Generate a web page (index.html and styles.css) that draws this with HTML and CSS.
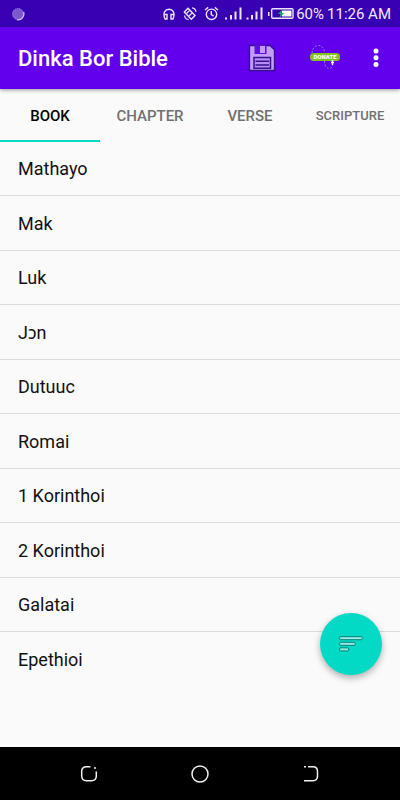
FILE: index.html
```html
<!DOCTYPE html>
<html lang="din">
<head>
<meta charset="utf-8">
<meta name="viewport" content="width=device-width, initial-scale=1">
<title>Dinka Bor Bible</title>
<link rel="stylesheet" href="styles.css">
</head>
<body>
<div class="status">
  <svg class="spinner" width="14" height="14" viewBox="0 0 14 14" aria-hidden="true">
    <circle cx="7" cy="7" r="5.500" fill="#7c58cf"/>
    <circle cx="7" cy="7" r="5.500" fill="none" stroke="#a78fe0" stroke-width="1" stroke-dasharray="1.200 .8"/>
    <path d="M12.600 5A6 6 0 0 1 6 12.800" fill="none" stroke="#cfc2f0" stroke-width="1.200"/>
  </svg>
  <div class="status-info">
    <svg width="106" height="16" viewBox="163 6 106 16" fill="none" stroke="#ece6fa" stroke-width="1.400" aria-hidden="true">
      <path d="M166 19C160.500 6 179.500 6 174 19M165.500 19h2.500v-4.500h-2.500M174.500 19h-2.500v-4.500h2.500"/>
      <path d="M189 8.300l7 7.200-3.700 3.700-7-7.200z"/>
      <path d="M187.500 13.500l3.200-3.200M190 16l3.200-3.200M193 7.800q3.500.4 4 4M185.500 15.500q.5 3.500 4 4.200" stroke-width="1.200"/>
      <circle cx="212.500" cy="14.300" r="5.200"/>
      <path d="M212.300 11v3.700l2.300 1.400M206 10l3.200-2.600M219 10l-3.200-2.600"/>
      <g fill="#ece6fa" stroke="none">
        <path d="M226 17.500h2v2h-2zM231 15h2v4.500h-2zM235.500 11.500h2v8h-2zM240.500 7.500h2v12h-2z"/>
        <path d="M247.500 17.500h2v2h-2zM252 15h2v4.500h-2zM256.500 11.500h2v8h-2zM261.500 7.500h2v12h-2z"/>
      </g>
    </svg>
    <svg width="26" height="16" viewBox="269 6 26 16" aria-hidden="true">
      <path d="M269 12h1.500v4H269z" fill="#ece6fa"/>
      <rect x="272.700" y="8.700" width="21.300" height="9.600" rx="1" fill="none" stroke="#ece6fa" stroke-width="1.400"/>
      <path d="M283 10.500h9.500v6H283z" fill="#fff"/>
      <path d="M283.500 9.500l-4.500 4.300h2.700l-1.200 3.700 4.800-4.500h-3z" fill="#24b45a"/>
    </svg>
    <span class="charge">60%</span>
    <span class="clock">11:26 AM</span>
  </div>
</div>
<header class="appbar">
  <h1>Dinka Bor Bible</h1>
  <button class="action save" aria-label="Save">
    <svg width="28" height="28" viewBox="0 0 28 28">
      <path d="M1.500 1.500H22l4.500 4.200v20.800h-25z" fill="#c39bfb" stroke="#35108a" stroke-width="1.300"/>
      <path d="M6.500 1h12v9h-12z" fill="#5c10da"/>
      <path d="M12 2h5v7h-5z" fill="#c39bfb"/>
      <path d="M6 13.500h16.500v10.800H6z" fill="#b78bf8" stroke="#35108a" stroke-width="1.500"/>
      <path d="M7.500 17.200h13.500M7.500 21h13.500" stroke="#35108a" stroke-width="1.500"/>
    </svg>
  </button>
  <button class="action donate" aria-label="Donate">
    <svg width="32" height="28" viewBox="0 0 32 28">
      <path d="M3 9C3 4 7 1 10 1.500S15 4 15.500 8M15.500 17c0 5 2 7.500 5 7.500s3-4 3-6" fill="none" stroke="#8fa2dc" stroke-width=".8" stroke-dasharray="2 1.600"/>
      <rect x="1" y="9" width="30" height="8" rx="3.500" fill="#7fc31c"/>
      <text class="donate-text" x="16" y="15" text-anchor="middle">DONATE</text>
      <path d="M23.500 16v5M22 18.500h3" stroke="#fff" stroke-width="1.400"/>
    </svg>
  </button>
  <button class="action more" aria-label="More options">
    <svg width="6" height="20" viewBox="0 0 6 20" fill="#fff"><circle cx="3" cy="3" r="2.500"/><circle cx="3" cy="9.800" r="2.500"/><circle cx="3" cy="16.600" r="2.500"/></svg>
  </button>
</header>
<nav class="tabs">
  <button class="tab selected">BOOK</button>
  <button class="tab">CHAPTER</button>
  <button class="tab">VERSE</button>
  <button class="tab small">SCRIPTURE</button>
</nav>
<main>
  <ul class="books">
    <li>Mathayo</li>
    <li>Mak</li>
    <li>Luk</li>
    <li>Jɔn</li>
    <li>Dutuuc</li>
    <li>Romai</li>
    <li>1 Korinthoi</li>
    <li>2 Korinthoi</li>
    <li>Galatai</li>
    <li>Epethioi</li>
  </ul>
  <button class="fab" aria-label="Sort">
    <svg width="24" height="16" viewBox="0 0 24 16" fill="#93f0e6" stroke="#0b7c74" stroke-width="1"><rect x=".7" y=".7" width="22.500" height="3" rx=".8"/><rect x=".7" y="6.300" width="15.500" height="3" rx=".8"/><rect x=".7" y="11.900" width="8.800" height="3" rx=".8"/></svg>
  </button>
</main>
<footer class="navbar">
  <button aria-label="Recent apps">
    <svg width="18" height="18" viewBox="0 0 18 18"><path d="M10.500 1.700H6.500Q1.700 1.700 1.700 6.500v4.500Q1.700 15.700 6.500 15.700h5Q16.300 15.700 16.300 11V6.500"/><path d="M14 3h2"/></svg>
  </button>
  <button aria-label="Home">
    <svg width="18" height="18" viewBox="0 0 18 18"><circle cx="9" cy="9" r="8"/></svg>
  </button>
  <button aria-label="Back">
    <svg width="18" height="18" viewBox="0 0 18 18"><path d="M6 1.700h5Q15.500 1.700 15.500 6.500v4.500Q15.500 15.700 11 15.700H2M2 1.700h2"/></svg>
  </button>
</footer>
</body>
</html>
```
FILE: styles.css
```css
* {
  box-sizing: border-box;
}

body {
  margin: 0;
  min-height: 100vh;
  display: flex;
  flex-direction: column;
  background: #fafafa;
  color: #111;
  font-family: Roboto, "Noto Sans", sans-serif;
}

button {
  display: flex;
  align-items: center;
  justify-content: center;
  margin: 0;
  padding: 0;
  border: 0;
  background: none;
  color: inherit;
  font: inherit;
}

svg {
  display: block;
}

.status {
  display: flex;
  align-items: center;
  justify-content: space-between;
  height: 27px;
  padding: 0 9px 0 11px;
  background: #3700b3;
  color: #f0ebfb;
  font-size: 15px;
}

.status-info {
  display: flex;
  align-items: center;
}

.charge {
  margin: 0 3px 0 2px;
}

.appbar {
  position: relative;
  display: flex;
  align-items: center;
  height: 62px;
  padding: 0 21px 0 18px;
  background: #6200ee;
  color: #fff;
  box-shadow: 0 1px 4px rgba(0, 0, 0, 0.4);
}

h1 {
  flex: 1;
  margin: 0;
  font-size: 22px;
  font-weight: 500;
}

.save {
  margin-right: 33px;
}

.donate {
  margin-right: 32px;
}

.donate-text {
  fill: #fff;
  font-size: 6px;
  font-weight: 900;
}

.tabs {
  display: grid;
  grid-template-columns: repeat(4, 1fr);
  height: 53px;
}

.tab {
  padding-top: 2px;
  border-bottom: 2px solid transparent;
  color: #707070;
  font-size: 15px;
  font-weight: 500;
}

.selected {
  border-color: #03dac5;
  color: #000;
}

.small {
  font-size: 13px;
}

main {
  position: relative;
  flex: 1;
}

.books {
  margin: 0;
  padding: 0;
  list-style: none;
}

.books li {
  display: flex;
  align-items: center;
  height: 54px;
  padding: 0 18px;
  border-bottom: 1px solid #dcdcdc;
  font-size: 18px;
}

.books li:nth-child(even) {
  height: 55px;
}

.books li:last-child {
  border-bottom: 0;
}

.fab {
  position: absolute;
  right: 18px;
  bottom: 72px;
  width: 62px;
  height: 62px;
  border-radius: 50%;
  background: #03dac5;
  box-shadow: 0 3px 7px rgba(0, 0, 0, 0.3);
}

.navbar {
  display: flex;
  align-items: center;
  justify-content: space-between;
  height: 53px;
  padding: 0 80px;
  background: #000;
}

.navbar svg {
  fill: none;
  stroke: #f2f2f2;
  stroke-width: 1.5px;
}
```
